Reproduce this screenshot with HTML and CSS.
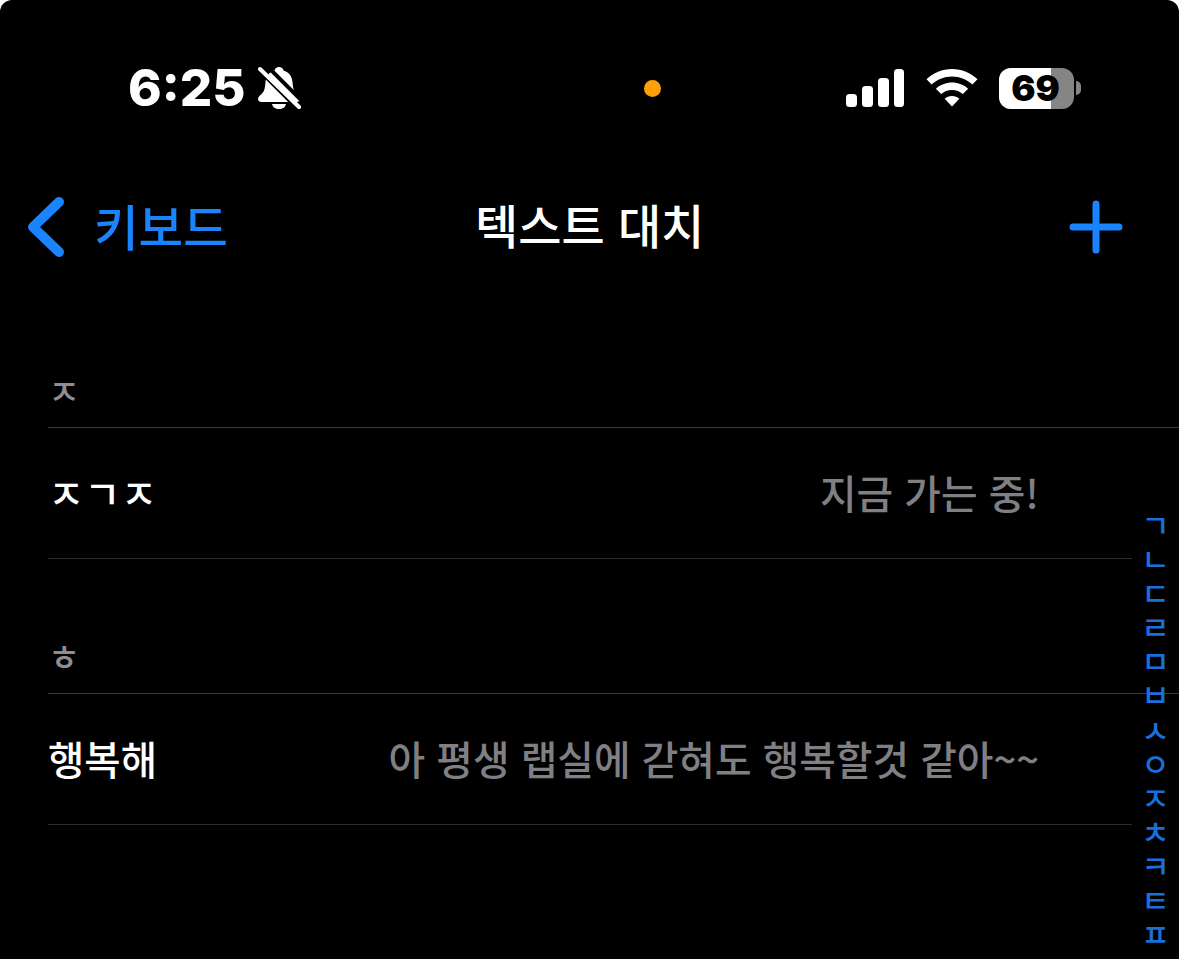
FILE: index.html
```html
<!DOCTYPE html>
<html lang="ko">
<head>
  <meta charset="UTF-8">
  <title>텍스트 대치</title>
  <link rel="stylesheet" href="styles.css">
</head>
<body>
  <div id="phone">
    <!-- Status bar -->
    <div id="status-bar">
      <div class="status-left">
        <span class="time">6:25</span>
        <svg class="bell" width="44" height="44" viewBox="0 0 44 44">
          <path d="M21 1c2.500 0 4 1.500 4.500 3.500C31 6 34 10.500 34.500 16c.5 5 .8 8.500 3 11 1.700 2 4.500 3.500 4.500 6 0 2-1.500 3-3.500 3h-35C1.500 36 0 35 0 33c0-2.500 2.800-4 4.500-6 2.200-2.500 2.500-6 3-11C8 10.500 11 6 16.500 4.500 17 2.500 18.500 1 21 1z" fill="#fff"/>
          <path d="M14 38h14c-.5 3-3.500 5-7 5s-6.500-2-7-5z" fill="#fff"/>
          <path d="M-2 1l44 44M6 -3l40 40" stroke="#000" stroke-width="4"/>
          <path d="M2 3l39 38" stroke="#fff" stroke-width="4" stroke-linecap="round"/>
        </svg>
      </div>
      <div class="orange-dot"></div>
      <div class="status-right">
        <svg width="58" height="38" viewBox="0 0 58 38" fill="#fff">
          <rect x="0" y="25" width="11" height="13" rx="3.5"/>
          <rect x="16" y="17" width="11" height="21" rx="3.5"/>
          <rect x="32" y="9" width="11" height="29" rx="3.5"/>
          <rect x="48" y="0" width="10" height="38" rx="3.5"/>
        </svg>
        <svg class="wifi" width="52" height="38" viewBox="0 0 52 38" fill="#fff">
          <path d="M26 0c9.800 0 18.800 3.800 25.500 10.200L46.400 15.500C41 10.500 33.800 7.400 26 7.400S11 10.500 5.600 15.500L.5 10.200C7.200 3.800 16.200 0 26 0z"/>
          <path d="M26 13.500c6.200 0 11.800 2.300 16.100 6.200l-5.200 5.300c-2.900-2.500-6.700-4.100-10.900-4.100s-8 1.600-10.900 4.100l-5.200-5.300c4.300-3.900 9.900-6.200 16.100-6.200z"/>
          <path d="M26 27c2.900 0 5.400 1 7.300 2.700L26 37.500l-7.300-7.800C20.600 28 23.100 27 26 27z"/>
        </svg>
        <div class="battery">
          <div class="battery-body">
            <div class="battery-level"></div>
            <span class="battery-text">69</span>
          </div>
          <div class="battery-tip"></div>
        </div>
      </div>
    </div>

    <!-- Nav bar -->
    <div id="nav-bar">
      <div class="nav-back">
        <svg width="40" height="62" viewBox="0 0 40 62"><path d="M33 6L7 31l26 25" fill="none" stroke="#1a84ff" stroke-width="10" stroke-linecap="round" stroke-linejoin="round"/></svg>
        <span>키보드</span>
      </div>
      <div class="nav-title">텍스트 대치</div>
      <svg class="nav-add" width="54" height="54" viewBox="0 0 54 54"><path d="M27 4v46M4 27h46" stroke="#1a84ff" stroke-width="7" stroke-linecap="round"/></svg>
    </div>

    <!-- List -->
    <div id="list">
      <div class="section-head">ㅈ</div>
      <div class="row">
        <span class="row-key">ㅈㄱㅈ</span>
        <span class="row-value">지금 가는 중!</span>
      </div>
      <div class="section-head second">ㅎ</div>
      <div class="row">
        <span class="row-key">행복해</span>
        <span class="row-value">아 평생 랩실에 갇혀도 행복할것 같아~~</span>
      </div>
    </div>

    <!-- Index -->
    <div id="index-bar">
      <span>ㄱ</span><span>ㄴ</span><span>ㄷ</span><span>ㄹ</span><span>ㅁ</span><span>ㅂ</span><span>ㅅ</span><span>ㅇ</span><span>ㅈ</span><span>ㅊ</span><span>ㅋ</span><span>ㅌ</span><span>ㅍ</span>
    </div>
  </div>
</body>
</html>
```
FILE: styles.css
```css
html, body {
  margin: 0;
  padding: 0;
  height: 100%;
  background: #fff;
  overflow: hidden;
}

body {
  font-family: "Noto Sans CJK KR", "Noto Sans", sans-serif;
}

#phone {
  position: relative;
  width: 1179px;
  height: 959px;
  background: #000;
  border-radius: 12px 12px 0 0;
  overflow: hidden;
}

#status-bar {
  height: 177px;
  display: flex;
  align-items: flex-start;
  box-sizing: border-box;
  padding-top: 66px;
}

.status-left {
  width: 300px;
  padding-left: 128px;
  box-sizing: border-box;
  display: flex;
  align-items: center;
  flex-shrink: 0;
  height: 44px;
}

.time {
  font-family: "Inter", "Liberation Sans", sans-serif;
  font-weight: 800;
  font-size: 51px;
  line-height: 44px;
  color: #fff;
}

.bell {
  margin-left: 12px;
  flex-shrink: 0;
  overflow: hidden;
}

.orange-dot {
  width: 17px;
  height: 17px;
  border-radius: 50%;
  background: #ff9f0a;
  margin: 14px 0 0 344px;
  flex-shrink: 0;
}

.status-right {
  display: flex;
  align-items: center;
  margin: 3px 0 0 185px;
  height: 38px;
}

.wifi {
  margin-left: 22px;
}

.battery {
  display: flex;
  align-items: center;
  margin-left: 21px;
}

.battery-body {
  position: relative;
  width: 75px;
  height: 41px;
  border-radius: 12px;
  background: #858585;
}

.battery-level {
  width: 52px;
  height: 100%;
  background: #fff;
  border-radius: 12px 0 0 12px;
}

.battery-text {
  position: absolute;
  top: 0;
  left: -1px;
  width: 100%;
  text-align: center;
  font-family: "Inter", "Liberation Sans", sans-serif;
  font-weight: 900;
  font-size: 36px;
  line-height: 41px;
  color: #000;
}

.battery-tip {
  width: 5px;
  height: 14px;
  margin-left: 2px;
  background: #858585;
  border-radius: 0 7px 7px 0;
}

#nav-bar {
  height: 99px;
  position: relative;
  display: flex;
  align-items: center;
  justify-content: space-between;
  padding: 0 56px 0 26px;
}

.nav-back {
  display: flex;
  align-items: center;
  color: #1a84ff;
  font-size: 48.5px;
  font-weight: 500;
  line-height: 62px;
}

.nav-back span {
  margin: 0 0 4px 28px;
}

.nav-title {
  position: absolute;
  left: 475px;
  top: 17px;
  color: #fff;
  font-size: 47px;
  font-weight: 500;
  line-height: 60px;
}

#list {
  padding-left: 48px;
}

.section-head {
  height: 152px;
  box-sizing: border-box;
  padding: 89px 0 0 0;
  font-size: 35px;
  font-weight: 500;
  line-height: 50px;
  color: #8d8d93;
  border-bottom: 1px solid #3a3a3c;
}

.section-head.second {
  height: 135px;
  padding-top: 72px;
}

.row {
  height: 131px;
  display: flex;
  align-items: center;
  justify-content: space-between;
  box-sizing: border-box;
  margin-right: 47px;
  padding: 0 93px 4px 0;
  border-bottom: 1px solid #2c2c2e;
}

.row-key {
  color: #fff;
  font-size: 39.5px;
  font-weight: 500;
}

.row-value {
  color: #7f7f84;
  font-size: 39.8px;
  font-weight: 500;
}

#index-bar {
  position: absolute;
  top: 507px;
  left: 1132px;
  width: 47px;
  display: flex;
  flex-direction: column;
  align-items: center;
  color: #1a6fd8;
  font-size: 31px;
  font-weight: 500;
  line-height: 34.1px;
}
```
